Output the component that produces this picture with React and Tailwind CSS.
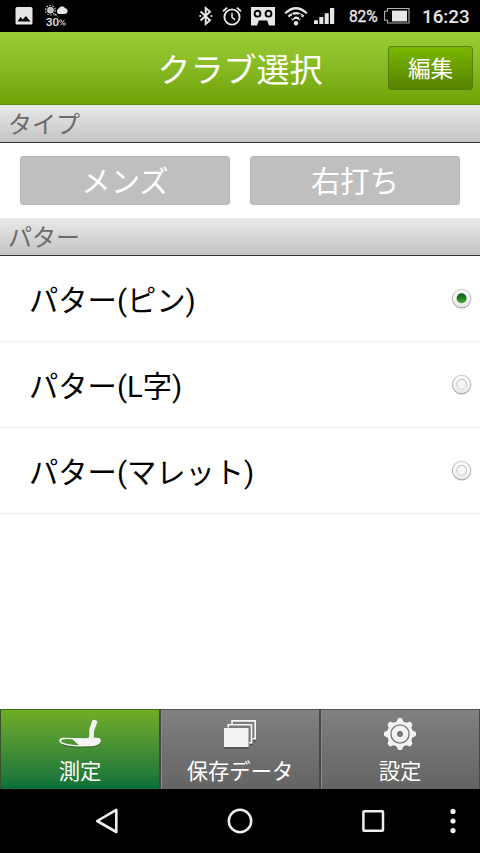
import React from "react";

function StatusBar() {
  return (
    <div className="flex h-8 shrink-0 items-center bg-black text-[#e6e6e6]">
      <svg className="ml-[15px] h-[18px] w-[18px] shrink-0" viewBox="0 0 17 18">
        <rect width="17" height="17.5" rx="1.6" fill="#e6e6e6" />
        <path d="M2 14.5 L5 10 L7.3 12.6 L10.4 9 L15 14.5 Z" fill="#000" />
      </svg>
      <div className="ml-[11px] flex w-6 shrink-0 flex-col items-center">
        <svg className="mt-px h-3 w-6" viewBox="0 0 24 12">
          <circle cx="6.4" cy="5.2" r="2.9" fill="#bbb" stroke="#e6e6e6" strokeWidth="1" />
          <circle cx="6.4" cy="5.2" r="4.8" fill="none" stroke="#ccc" strokeWidth="1.2" strokeDasharray="1.6 1.4" />
          <path d="M14.5 9 a2.9 2.9 0 0 1 0 -5.2 a3.7 3.7 0 0 1 6.5 -.9 a3.1 3.1 0 0 1 .2 6.1 Z" fill="#e6e6e6" />
          <path d="M9.5 10.6 l2.2 -2.2 l1.8 2.2 Z" fill="#bbb" />
        </svg>
        <div className="flex h-[11px] items-baseline text-[11.5px] font-medium leading-[11px]">
          30
          <svg className="h-[7px] w-[7px]" viewBox="0 0 7 7" fill="none" stroke="#ccc" strokeWidth=".9">
            <circle cx="1.7" cy="2" r="1.2" />
            <circle cx="5.2" cy="5" r="1.2" />
            <path d="M5.4 .8 L1.6 6.3" />
          </svg>
        </div>
      </div>
      <svg className="ml-[131px] h-5 w-[14px] shrink-0" viewBox="0 0 14 20">
        <path d="M1.5 5.5 L11 14.3 L6.7 18 V2 L11 5.8 L1.5 14.5" fill="none" stroke="#e6e6e6" strokeWidth="1.9" />
        <circle cx="1.2" cy="10" r="1.1" fill="#e6e6e6" />
        <circle cx="12.4" cy="10" r="1.1" fill="#e6e6e6" />
      </svg>
      <svg className="ml-[9px] h-5 w-5 shrink-0" viewBox="0 0 20 20">
        <circle cx="10" cy="11" r="7.6" fill="none" stroke="#e6e6e6" strokeWidth="1.9" />
        <path d="M10 6.8 V11.4 L13 13.6" fill="none" stroke="#e6e6e6" strokeWidth="1.5" />
        <path d="M1 5.2 L5.2 1.6 M19 5.2 L14.8 1.6" stroke="#e6e6e6" strokeWidth="1.8" />
      </svg>
      <svg className="ml-[9px] h-[19px] w-6 shrink-0" viewBox="0 0 24 19">
        <path d="M0 0 H24 V18.5 H18 L16.2 13.5 H7.8 L6 18.5 H0 Z" fill="#e6e6e6" />
        <circle cx="6.5" cy="6.7" r="2.9" fill="#e6e6e6" stroke="#000" strokeWidth="1.9" />
        <circle cx="17.5" cy="6.7" r="2.9" fill="#e6e6e6" stroke="#000" strokeWidth="1.9" />
      </svg>
      <svg className="ml-[9px] h-5 w-6 shrink-0" viewBox="0 0 24 20">
        <g fill="none" stroke="#e6e6e6" strokeWidth="2.2">
          <path d="M1.2 7.3 Q12 -2.8 22.8 7.3" />
          <path d="M4.5 10.6 Q12 3.6 19.5 10.6" />
          <path d="M7.8 13.6 Q12 9.8 16.2 13.6" />
        </g>
        <circle cx="12" cy="17.2" r="2.2" fill="#e6e6e6" />
        <path d="M8.4 7.5 V12.6 M6.4 10.4 L8.4 12.8 L10.4 10.4 M15.6 13.2 V8 M13.6 10.2 L15.6 7.8 L17.6 10.2" stroke="#000" strokeWidth="1" fill="none" />
      </svg>
      <svg className="ml-[6px] h-[17px] w-[21px] shrink-0" viewBox="0 0 21 17" fill="#e6e6e6">
        <rect x="0" y="12.3" width="4" height="3.7" />
        <rect x="5.3" y="9" width="4" height="7" />
        <rect x="10.7" y="5.2" width="4" height="10.8" />
        <rect x="16" y="0" width="4.2" height="16" />
      </svg>
      <div className="ml-[14px] w-[30px] whitespace-nowrap pt-0.5 text-[15.6px] leading-[30px] tracking-[-0.2px] [-webkit-text-stroke:0.3px_#e6e6e6]">82%</div>
      <svg className="ml-[5px] h-[18px] w-[28px] shrink-0" viewBox="0 0 28 18">
        <path d="M3.5 1.5 H25 V16 H3.5 V13.3 H.6 V4.3 H3.5 Z" fill="none" stroke="#b0b0b0" strokeWidth="1.1" />
        <rect x="8" y="3.6" width="15" height="10.8" fill="#e6e6e6" />
      </svg>
      <div className="ml-[10px] whitespace-nowrap pt-0.5 text-[18.8px] font-medium leading-[30px]">16:23</div>
    </div>
  );
}

function SectionHeader({ children }) {
  return (
    <div className="h-[38px] shrink-0 border-b border-[#333] bg-linear-to-b from-[#e9e9e9] to-[#c4c4c4] pl-2 text-[24px] leading-[41px] text-[#6b6b6b]">
      {children}
    </div>
  );
}

function TypeButton({ children }) {
  return (
    <button className="h-[49px] flex-1 rounded-[3px] border border-[#b8b8b8] bg-[#bfbfbf] pt-1 text-[29.3px] leading-[43px] text-white">
      {children}
    </button>
  );
}

function Radio({ checked }) {
  return (
    <svg className="h-[22px] w-[22px]" viewBox="0 0 22 22">
      <defs>
        <linearGradient id="rim" x1="0" y1="0" x2="0" y2="1">
          <stop offset="0" stopColor="#cfcfcf" />
          <stop offset="1" stopColor="#a6a6a6" />
        </linearGradient>
        <linearGradient id="face" x1="0" y1="0" x2="0" y2="1">
          <stop offset="0" stopColor="#fff" />
          <stop offset="1" stopColor="#e8e8e8" />
        </linearGradient>
        <linearGradient id="well" x1="0" y1="0" x2="0" y2="1">
          <stop offset="0" stopColor="#b5b5b5" />
          <stop offset="1" stopColor="#d4d4d4" />
        </linearGradient>
        <linearGradient id="dot" x1="0" y1="0" x2="0" y2="1">
          <stop offset="0" stopColor="#0b5a14" />
          <stop offset="1" stopColor="#45a832" />
        </linearGradient>
      </defs>
      <circle cx="10.6" cy="10.6" r="9.3" fill="url(#face)" stroke="url(#rim)" strokeWidth="1.1" />
      {checked ? (
        <circle cx="10.6" cy="10.3" r="5" fill="url(#dot)" />
      ) : (
        <circle cx="10.6" cy="10.3" r="4.9" fill="#f6f6f6" stroke="url(#well)" strokeWidth="1" />
      )}
    </svg>
  );
}

function ClubRow({ label, checked }) {
  return (
    <div className="flex h-[86px] shrink-0 items-center justify-between border-b border-[#ececec] pr-[7px] pl-[29px]">
      <span className="pt-1 text-[29.3px] leading-[44px] text-black">{label}</span>
      <Radio checked={checked} />
    </div>
  );
}

const putter =
  "M34.2 3.8 Q34.7 2.5 36 2.8 L38.4 3.6 Q39.5 4.2 39.1 5.5 L36.3 13.6 Q35.8 15 35.9 20.6 L41.2 21 Q43 21.6 42.9 24 Q42.4 28.6 33 29.2 L22 29.5 Q10 29.4 4 27 Q1 25.6 1.1 23.6 Q1.4 20.9 5 20.7 L28 21.2 Q31.2 21.2 31.3 19 L31.3 12.6 Z";

function PutterIcon() {
  return (
    <svg className="h-8 w-[44px]" viewBox="0 0 44 32">
      <path d="M4 27.4 Q10 30 22 30 L33 29.8 Q41 29 42.6 25" fill="none" stroke="#222" strokeOpacity=".35" strokeWidth="1.4" />
      <path fillRule="evenodd" d={putter + " M4.4 22.4 Q2.4 23.6 3.6 24.9 Q7 27.2 21 28.2 L14.4 22.2 Q7 21.8 4.4 22.4 Z"} fill="#f4f4f4" />
    </svg>
  );
}

function StackIcon() {
  return (
    <svg className="h-8 w-[34px]" viewBox="0 0 34 32">
      <path d="M1 30.8 H26 M27 27.6 H29.5 M30.5 23.6 H33" stroke="#484848" strokeWidth="1.3" />
      <path d="M9 7 V3.9 H32.2 V21.8 H29.5" fill="none" stroke="#f6f6f6" strokeWidth="1.6" />
      <path d="M5.2 10.5 V7.8 H28.5 V25.7 H26" fill="none" stroke="#f6f6f6" strokeWidth="1.6" />
      <rect x="1" y="11" width="24.5" height="19" fill="#f3f3f3" />
    </svg>
  );
}

const teeth = [0, 45, 90, 135, 180, 225, 270, 315];

function GearIcon() {
  return (
    <svg className="h-[34px] w-[34px]" viewBox="0 0 34 34">
      <circle cx="17" cy="18" r="13" fill="#444" opacity=".35" />
      <g fill="#f3f3f3">
        {teeth.map((a) => (
          <path key={a} d="M11.6 5.8 Q14 4.8 14.5 2.4 Q14.8 1 16 1 H18 Q19.2 1 19.5 2.4 Q20 4.8 22.4 5.8 Z" transform={`rotate(${a} 17 17)`} />
        ))}
        <circle cx="17" cy="17" r="12.8" />
      </g>
      <circle cx="17" cy="17" r="9.1" fill="none" stroke="#787878" strokeWidth="1.3" />
      <circle cx="17" cy="17" r="2.9" fill="#707070" />
      <circle cx="17" cy="17" r=".8" fill="#aaa" />
    </svg>
  );
}

function Tab({ icon, label, active }) {
  return (
    <div
      className={
        "flex flex-1 flex-col items-center border-x border-t pt-[7px] text-[21.3px] text-white " +
        (active
          ? "border-x-[#39522c] border-t-[#496b20] bg-linear-to-b from-[#70ad24] to-[#03703a]"
          : "border-x-[#484848] border-t-[#555] bg-linear-to-b from-[#808080] to-[#646464] shadow-[inset_1px_0_0_#8a8a8a]")
      }
    >
      <div className="flex h-[34px] items-start">{icon}</div>
      <div className="mt-1.5 h-[30px] leading-[30px]">{label}</div>
    </div>
  );
}

function NavBar() {
  return (
    <div className="flex h-16 shrink-0 items-center bg-black pl-[94px]">
      <svg className="h-7 w-[26px]" viewBox="0 0 26 28">
        <path d="M22.3 2.8 V25 L3.2 14 Z" fill="none" stroke="#eee" strokeWidth="2.6" strokeLinejoin="round" />
      </svg>
      <svg className="ml-[106px] h-7 w-7" viewBox="0 0 28 28">
        <circle cx="14" cy="14" r="11.2" fill="none" stroke="#eee" strokeWidth="2.5" />
      </svg>
      <svg className="ml-[105px] h-7 w-7" viewBox="0 0 28 28">
        <rect x="4.4" y="4.2" width="19.6" height="19.6" rx=".8" fill="none" stroke="#eee" strokeWidth="2.5" />
      </svg>
      <svg className="ml-[62px] h-7 w-2" viewBox="0 0 8 28" fill="#eee">
        <circle cx="4" cy="4.4" r="2.6" />
        <circle cx="4" cy="14" r="2.6" />
        <circle cx="4" cy="23.6" r="2.6" />
      </svg>
    </div>
  );
}

export default function App() {
  return (
    <div className="flex h-[853px] w-[480px] flex-col overflow-hidden bg-white font-[Roboto,'Noto_Sans_CJK_JP',sans-serif]">
      <StatusBar />
      <header className="grid h-[73px] shrink-0 grid-cols-[1fr_auto_1fr] items-center border-b border-[#5c8c08] bg-linear-to-b from-[#9ccf36] to-[#70a303]">
        <div />
        <h1 className="pt-1.5 text-[33px] leading-[66px] text-white">クラブ選択</h1>
        <button className="mr-[7px] h-11 w-[85px] justify-self-end rounded-[3px] border border-[#528207] bg-linear-to-b from-[#7ab800] to-[#578200] pt-1 text-[22.6px] leading-[38px] text-white">
          編集
        </button>
      </header>
      <SectionHeader>タイプ</SectionHeader>
      <div className="flex h-[75px] shrink-0 gap-5 px-5 pt-[13px]">
        <TypeButton>メンズ</TypeButton>
        <TypeButton>右打ち</TypeButton>
      </div>
      <SectionHeader>パター</SectionHeader>
      <main className="flex flex-1 flex-col">
        <ClubRow label="パター(ピン)" checked />
        <ClubRow label="パター(L字)" />
        <ClubRow label="パター(マレット)" />
      </main>
      <nav className="flex h-20 shrink-0">
        <Tab icon={<PutterIcon />} label="測定" active />
        <Tab icon={<StackIcon />} label="保存データ" />
        <Tab icon={<GearIcon />} label="設定" />
      </nav>
      <NavBar />
    </div>
  );
}
